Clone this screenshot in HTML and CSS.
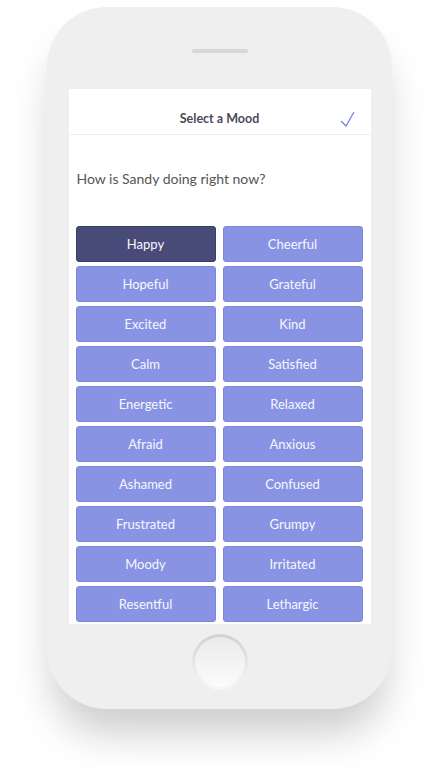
FILE: index.html
```html
<!DOCTYPE html>
<html lang="en">
<head>
    <meta charset="UTF-8">
    <meta name="viewport" content="width=device-width, initial-scale=1.0">
    <title>Select a Mood</title>
    <link rel="stylesheet" href="styles.css">
</head>
<body>
    <div class="page">
        <div class="phone">
            <div class="speaker"></div>
            <div class="screen">
                <div class="header">
                    <span class="title">Select a Mood</span>
                    <svg class="check" width="16" height="16" viewBox="0 0 16 16">
                        <path d="M1 10 L6 15 L14 1" fill="none" stroke="#6f78e2" stroke-width="1.2"/>
                    </svg>
                </div>
                <p class="question">How is Sandy doing right now?</p>
                <div class="moods">
                    <button class="mood selected">Happy</button>
                    <button class="mood">Cheerful</button>
                    <button class="mood">Hopeful</button>
                    <button class="mood">Grateful</button>
                    <button class="mood">Excited</button>
                    <button class="mood">Kind</button>
                    <button class="mood">Calm</button>
                    <button class="mood">Satisfied</button>
                    <button class="mood">Energetic</button>
                    <button class="mood">Relaxed</button>
                    <button class="mood">Afraid</button>
                    <button class="mood">Anxious</button>
                    <button class="mood">Ashamed</button>
                    <button class="mood">Confused</button>
                    <button class="mood">Frustrated</button>
                    <button class="mood">Grumpy</button>
                    <button class="mood">Moody</button>
                    <button class="mood">Irritated</button>
                    <button class="mood">Resentful</button>
                    <button class="mood">Lethargic</button>
                </div>
            </div>
            <div class="home">
                <div class="home-inner"></div>
            </div>
        </div>
    </div>
</body>
</html>
```

FILE: styles.css
```css
body {
    margin: 0;
    background-color: #fff;
    font-family: Lato, "Noto Sans", sans-serif;
}
.page {
    min-height: 782px;
    padding-top: 7px;
    box-sizing: border-box;
}
.phone {
    width: 345px;
    height: 702px;
    margin-left: 47px;
    border-radius: 60px;
    background-color: #efefef;
    display: flex;
    flex-direction: column;
    align-items: center;
    box-shadow: 0 30px 40px -6px rgba(0,0,0,0.2);
}
.speaker {
    width: 56px;
    height: 4px;
    margin-top: 42px;
    border-radius: 2px;
    background-color: #d7d7d7;
}
.screen {
    width: 302px;
    height: 535px;
    margin-top: 36px;
    background-color: #fff;
    overflow: hidden;
}
.header {
    height: 46px;
    padding-top: 22px;
    box-sizing: border-box;
    border-bottom: 1px solid #eeeeee;
    display: flex;
    justify-content: center;
    position: relative;
}
.title {
    font-size: 12.5px;
    line-height: 16px;
    font-weight: bold;
    color: #4b4b58;
}
.check {
    position: absolute;
    right: 15px;
    top: 22px;
}
.question {
    margin: 34px 0 37px 8px;
    font-size: 14px;
    line-height: 20px;
    color: #555;
}
.moods {
    display: grid;
    grid-template-columns: 140px 140px;
    column-gap: 7px;
    row-gap: 4px;
    padding-left: 7px;
}
.mood {
    height: 36px;
    padding: 0;
    font-family: Lato, "Noto Sans", sans-serif;
    font-size: 13px;
    color: #f7f7ff;
    background-color: #8893e3;
    border: 1px solid #7d88dc;
    border-radius: 3px;
}
.mood.selected {
    background-color: #484b78;
    border-color: #3a3d66;
}
.home {
    width: 56px;
    height: 56px;
    margin-top: 10px;
    padding: 3px;
    box-sizing: border-box;
    border-radius: 50%;
    background: linear-gradient(#d2d2d2, #f7f7f7);
}
.home-inner {
    width: 100%;
    height: 100%;
    border-radius: 50%;
    background: linear-gradient(#ebebeb, #fbfbfb);
}
```
